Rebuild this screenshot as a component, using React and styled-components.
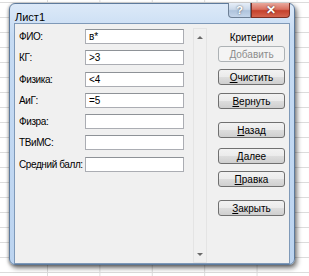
import React from 'react';
import styled, { createGlobalStyle } from 'styled-components';

const GlobalStyle = createGlobalStyle`
  html, body {
    margin: 0;
    padding: 0;
  }
  body {
    width: 309px;
    height: 276px;
    overflow: hidden;
    font-family: "Liberation Sans", Arial, sans-serif;
    background-color: #ffffff;
    background-image:
      linear-gradient(to right, #dcdcdc 1px, transparent 1px),
      linear-gradient(to bottom, #dcdcdc 1px, transparent 1px);
    background-size: 52.4px 15px;
    background-position: 47px 2px;
  }
`;

const Page = styled.div`
  padding: 3px 0 0 9px;
`;

const Window = styled.div`
  width: 276px;
  height: 255px;
  display: flex;
  flex-direction: column;
  border: 1px solid #5d7a9c;
  border-radius: 6px;
  background: linear-gradient(to bottom, #dce9f8 0%, #c6dbf3 12%, #bcd4f0 100%);
  box-shadow: 2px 3px 5px rgba(0, 0, 0, 0.55), -1px 1px 3px rgba(0, 0, 0, 0.25);
  padding: 0 4px 5px 4px;
`;

const TitleBar = styled.div`
  height: 24px;
  display: flex;
  justify-content: space-between;
  align-items: flex-start;
`;

const Title = styled.span`
  padding: 7px 0 0 1px;
  font-size: 11px;
  color: #000;
`;

const Controls = styled.div`
  display: flex;
  margin-top: -1px;
`;

const CaptionButton = styled.div`
  height: 14px;
  width: ${p => p.$w}px;
  display: flex;
  align-items: center;
  justify-content: center;
  border: 1px solid ${p => (p.$close ? '#7a2d22' : '#6d7f95')};
  border-top: none;
  border-radius: ${p => (p.$close ? '0 0 4px 0' : '0 0 0 4px')};
  background: ${p =>
    p.$close
      ? 'linear-gradient(to bottom, #e9a99d 0%, #d9705f 45%, #c5412c 55%, #d4654f 100%)'
      : 'linear-gradient(to bottom, #e6eef8 0%, #cbd9ea 45%, #aec3dc 55%, #c4d5ea 100%)'};
  color: #fff;
  font-weight: bold;
  font-size: ${p => (p.$close ? 12 : 11)}px;
  text-shadow: 0 0 2px rgba(0, 0, 0, 0.7);
`;

const Client = styled.div`
  flex: 1;
  display: flex;
  align-items: flex-start;
  background: #f0f0f0;
  border: 1px solid #7f99b8;
  padding-left: 4px;
`;

const Form = styled.div`
  display: grid;
  grid-template-columns: 66px 99px;
  grid-auto-rows: 15px;
  row-gap: 6.3px;
  align-items: center;
  margin-top: 5px;
`;

const Label = styled.label`
  font-size: 10px;
  letter-spacing: -0.4px;
  color: #000;
  white-space: nowrap;
`;

const Field = styled.div`
  height: 13px;
  background: #fff;
  border: 1px solid #abadb3;
  border-top-color: #8e9297;
  font-size: 10px;
  line-height: 13px;
  padding-left: 3px;
  color: #000;
`;

const Scroll = styled.div`
  width: 12px;
  height: 220px;
  margin: 4px 0 0 9px;
  border: 1px solid #e4e4e4;
  display: flex;
  flex-direction: column;
  justify-content: space-between;
  align-items: center;
  padding: 7px 0 6px;
`;

const Arrow = styled.div`
  width: 0;
  height: 0;
  border-left: 3px solid transparent;
  border-right: 3px solid transparent;
  ${p => (p.$down ? 'border-top: 3px solid #6a6a6a;' : 'border-bottom: 3px solid #6a6a6a;')}
`;

const Side = styled.div`
  width: 67px;
  margin-left: 11px;
  display: flex;
  flex-direction: column;
`;

const Caption = styled.div`
  font-size: 10px;
  text-align: center;
  margin-top: 8px;
  height: 12px;
  color: #000;
`;

const Button = styled.div`
  height: 14px;
  margin-top: ${p => p.$gap}px;
  display: flex;
  align-items: center;
  justify-content: center;
  font-size: 10px;
  border-radius: 3px;
  border: 1px solid ${p => (p.$disabled ? '#adb2b5' : '#707070')};
  color: ${p => (p.$disabled ? '#8c8c8c' : '#000')};
  background: ${p =>
    p.$disabled
      ? '#f4f4f4'
      : 'linear-gradient(to bottom, #f2f2f2 0%, #ebebeb 48%, #dddddd 52%, #cfcfcf 100%)'};
`;

const rows = [
  ['ФИО:', 'в*'],
  ['КГ:', '>3'],
  ['Физика:', '<4'],
  ['АиГ:', '=5'],
  ['Физра:', ''],
  ['ТВиМС:', ''],
  ['Средний балл:', ''],
];

const buttons = [
  { text: 'Добавить', gap: 2, disabled: true },
  { text: 'Очистить', gap: 7, key: true },
  { text: 'Вернуть', gap: 8, key: true },
  { text: 'Назад', gap: 13, key: true },
  { text: 'Далее', gap: 10, key: true },
  { text: 'Правка', gap: 7, key: true },
  { text: 'Закрыть', gap: 13, key: true },
];

const App = () => (
  <React.Fragment>
    <GlobalStyle />
    <Page>
      <Window>
        <TitleBar>
          <Title>Лист1</Title>
          <Controls>
            <CaptionButton $w={21}>?</CaptionButton>
            <CaptionButton $w={37} $close>✕</CaptionButton>
          </Controls>
        </TitleBar>
        <Client>
          <Form>
            {rows.map(([label, value]) => (
              <React.Fragment key={label}>
                <Label>{label}</Label>
                <Field>{value}</Field>
              </React.Fragment>
            ))}
          </Form>
          <Scroll>
            <Arrow />
            <Arrow $down />
          </Scroll>
          <Side>
            <Caption>Критерии</Caption>
            {buttons.map(b => (
              <Button key={b.text} $gap={b.gap} $disabled={b.disabled}>
                {b.key ? (
                  <span>
                    <u>{b.text[0]}</u>
                    {b.text.slice(1)}
                  </span>
                ) : (
                  b.text
                )}
              </Button>
            ))}
          </Side>
        </Client>
      </Window>
    </Page>
  </React.Fragment>
);

export default App;
